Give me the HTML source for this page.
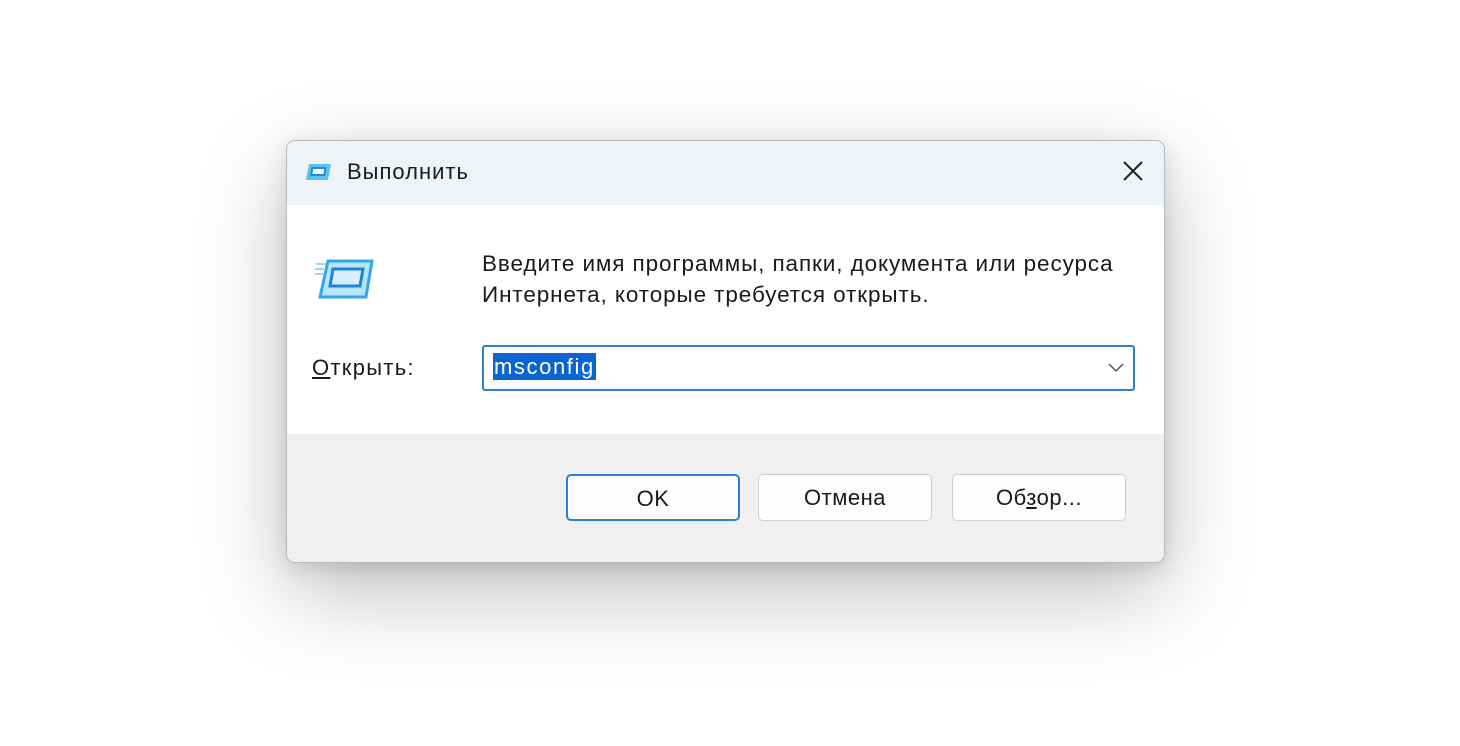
<!DOCTYPE html>
<html><head><style>
body{margin:0;width:1460px;height:746px;background:#fff;position:relative;overflow:hidden;font-family:"Liberation Sans",sans-serif;color:#1a1a1a}
.dlg{position:absolute;left:286px;top:140px;width:877px;height:421px;border:1px solid #b8b8b8;border-radius:9px;overflow:hidden;box-shadow:0 30px 90px rgba(0,0,0,.25),0 6px 20px rgba(0,0,0,.12);background:#fff}
.title{position:absolute;left:0;top:0;width:100%;height:64px;background:#eff3f8}
.foot{position:absolute;left:0;top:293px;width:100%;height:128px;background:#f0f0f0}
.t{position:absolute;white-space:nowrap}
.btn{position:absolute;top:333px;width:174px;height:47px;border:1px solid #cfcfcf;border-radius:5px;background:#fdfdfd;font-size:22px;text-align:center;line-height:45px;box-sizing:border-box;letter-spacing:.5px}
</style></head><body>
<div class="dlg">
<div class="title"></div>
<svg style="position:absolute;left:18px;top:22px" width="28" height="18" viewBox="0 0 28 18"><path d="M4 1h22l-3 16H1z" fill="#5cc0ef"/><rect x="8" y="5" width="13" height="7" fill="#fff" stroke="#1f8ad6" stroke-width="2" transform="skewX(-8)"/></svg>
<div class="t" style="left:60px;top:18px;font-size:22px;letter-spacing:1px">Выполнить</div>
<svg style="position:absolute;left:835px;top:19px" width="22" height="22"><path d="M2 2L20 20M20 2L2 20" stroke="#222" stroke-width="2"/></svg>
<svg style="position:absolute;left:27px;top:117px" width="60" height="42" viewBox="0 0 60 42"><path d="M14 3h44l-6 36H6z" fill="#b9e3f8" stroke="#31a8eb" stroke-width="3"/><path d="M19 11h30l-3 17H16z" fill="#d7eefb" stroke="#1a86d4" stroke-width="3"/><path d="M2 6h10M1 11h9M1 16h8" stroke="#9fd6f5" stroke-width="2"/></svg>
<div class="t" style="left:195px;top:107px;font-size:22.5px;line-height:31px;letter-spacing:.9px">Введите имя программы, папки, документа или ресурса<br>Интернета, которые требуется открыть.</div>
<div class="t" style="left:25px;top:214px;font-size:22px;letter-spacing:1.3px"><u>О</u>ткрыть:</div>
<div style="position:absolute;left:195px;top:204px;width:653px;height:46px;border:2px solid #2f7fd0;border-radius:3px;box-sizing:border-box;background:#fff"></div>
<div class="t" style="left:206px;top:212px;height:27px;background:#0a64d2;color:#fff;font-size:22px;line-height:27px;padding:0 1px;letter-spacing:1.6px">msconfig</div>
<svg style="position:absolute;left:821px;top:222px" width="16" height="10"><path d="M1 1l7 7 7-7" stroke="#555" stroke-width="1.5" fill="none"/></svg>
<div class="foot"></div>
<div class="btn" style="left:279px;border:2px solid #2f7fd0">OK</div>
<div class="btn" style="left:471px">Отмена</div>
<div class="btn" style="left:665px">Об<u>з</u>ор...</div>
</div>
</body></html>
